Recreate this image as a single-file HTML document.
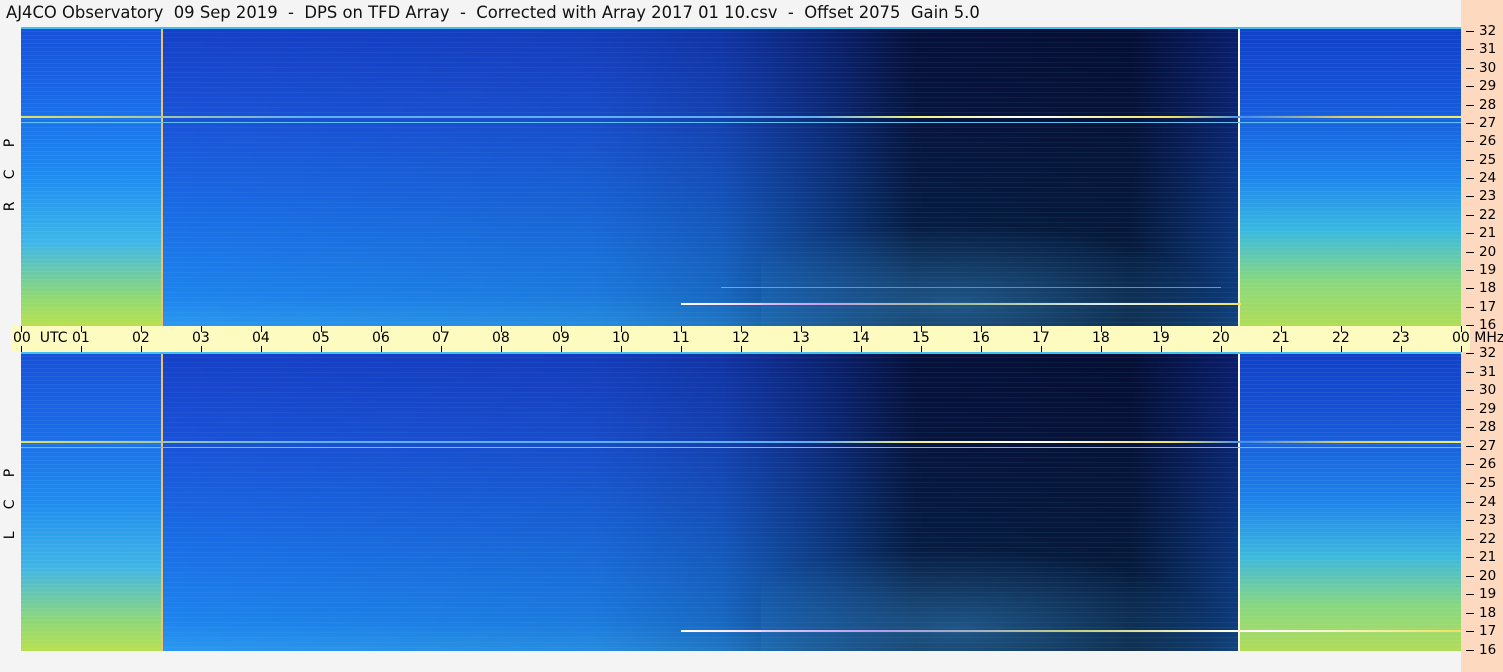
<!DOCTYPE html>
<html><head><meta charset="utf-8"><style>
body{margin:0;width:1503px;height:672px;background:#f4f4f4;position:relative;overflow:hidden;font-family:"DejaVu Sans","Liberation Sans",sans-serif}
.t{position:absolute;left:6px;top:3px;font-size:16.4px;color:#111;white-space:pre}
.peach{position:absolute;left:1461px;top:0;width:42px;height:672px;background:#fcd9bf}
.band{position:absolute;left:11px;top:326px;width:1459px;height:26px;background:#fdfbc0}
.p{position:absolute;left:21px;width:1440px;height:299px;overflow:hidden}
.seg{position:absolute;top:0;height:100%}
.L{left:0;width:140px;background:
 repeating-linear-gradient(180deg,rgba(255,255,255,.06) 0 1px,transparent 1px 4px),
 linear-gradient(180deg,#1650d8 0%,#1a6ae8 25%,#1e8cf0 50%,#3fb6e8 72%,#8ed878 90%,#b8e050 100%)}
.M{left:142px;width:1075px;background:
 repeating-linear-gradient(180deg,rgba(120,200,255,.07) 0 1px,transparent 1px 5px),
 linear-gradient(90deg,rgba(0,0,20,0) 0%,rgba(0,0,20,.08) 40%,rgba(0,0,30,.22) 52%,rgba(0,0,20,.5) 62%,rgba(0,0,10,.75) 70%,rgba(0,0,10,.78) 90%,rgba(0,0,30,.55) 100%),
 linear-gradient(180deg,#1640c8 0%,#1a52d8 30%,#1a6ae4 60%,#1e84ee 90%,#2a98f0 100%)}
.R{left:1219px;width:221px;background:
 repeating-linear-gradient(180deg,rgba(255,255,255,.06) 0 1px,transparent 1px 4px),
 linear-gradient(180deg,#1040c8 0%,#1656d8 25%,#1e84ec 50%,#3ab8e0 68%,#88d880 85%,#b0dc58 100%)}
.ln{position:absolute;top:0;height:100%;width:2px;background:#fff6d8}
.hl{position:absolute;height:2px}
.ax{position:absolute;font-size:14px;color:#000;white-space:nowrap}
.tk{position:absolute;width:1px;height:6px;background:#000}
.rt{position:absolute;left:1466px;width:8px;height:1px;background:#000}
.rl{position:absolute;left:1479px;font-size:13.5px;color:#000;line-height:14px}
.vl{position:absolute;left:-40px;width:100px;text-align:center;font-size:14px;color:#000;transform:rotate(-90deg);white-space:pre;line-height:16px}
</style></head><body>
<div class="t">AJ4CO Observatory  09 Sep 2019  -  DPS on TFD Array  -  Corrected with Array 2017 01 10.csv  -  Offset 2075  Gain 5.0</div>
<div class="peach"></div>
<div class="band"></div>

<div class="p" style="top:27px">
 <div class="seg L"></div><div class="seg M"></div><div class="seg R"></div>
 <div class="ln" style="left:140px;background:#f4c070"></div><div class="ln" style="left:1217px"></div>
 <div style="position:absolute;left:0;top:0;width:1440px;height:2px;background:#40c0f0"></div>
 <div class="hl" style="left:0;top:89px;width:1440px;background:linear-gradient(90deg,#e0e060,#60b0f0 20%,#60b0f0 55%,#f0f080 62%,#fff 70%,#f0e060 80%,#4090f0 85%,#e0d060 92%,#f0f070)"></div>
 <div class="hl" style="left:0;top:95px;width:1440px;height:1px;background:#60c0f0"></div>
 <div class="hl" style="left:660px;top:276px;width:560px;background:linear-gradient(90deg,#fff,#f0a0f0,#f0e060,#fff,#f0e060)"></div>
 <div class="hl" style="left:700px;top:260px;width:500px;height:1px;background:rgba(240,200,80,.6)"></div>
 <div style="position:absolute;left:740px;top:190px;width:480px;height:109px;background:radial-gradient(ellipse at 40% 80%,rgba(60,150,220,.45),transparent 65%)"></div>
</div>

<div class="p" style="top:352px">
 <div class="seg L"></div><div class="seg M"></div><div class="seg R"></div>
 <div class="ln" style="left:140px;background:#f4c070"></div><div class="ln" style="left:1217px"></div>
 <div style="position:absolute;left:0;top:0;width:1440px;height:2px;background:#40c0f0"></div>
 <div class="hl" style="left:0;top:89px;width:1440px;background:linear-gradient(90deg,#e0e060,#60b0f0 20%,#60b0f0 55%,#f0f080 62%,#fff 70%,#f0e060 80%,#4090f0 85%,#e0d060 92%,#f0f070)"></div>
 <div class="hl" style="left:0;top:95px;width:1440px;height:1px;background:#60c0f0"></div>
 <div class="hl" style="left:660px;top:278px;width:780px;background:linear-gradient(90deg,#fff,#f0a0f0,#f0e060,#fff,#f0e060)"></div>
 <div style="position:absolute;left:740px;top:190px;width:480px;height:109px;background:radial-gradient(ellipse at 40% 80%,rgba(60,150,220,.45),transparent 65%)"></div>
</div>

<div class="vl" style="top:167px">R     C     P</div>
<div class="vl" style="top:496px">L     C     P</div>

<div id="axes"></div>
<script>
var h='';
for(var i=0;i<=24;i++){var x=21+i*60;
 h+='<div class="tk" style="left:'+x+'px;top:326px"></div><div class="tk" style="left:'+x+'px;top:346px"></div>';
 var lab=(i<10?'0'+i:''+i);
 if(i==0)h+='<div class="ax" style="left:13px;top:330px">00 &nbsp;UTC</div>';
 else if(i==24)h+='<div class="ax" style="left:1452px;top:330px">00 MHz</div>';
 else h+='<div class="ax" style="left:'+(x-9)+'px;top:330px">'+lab+'</div>';}
function ra(top,bot){for(var f=32;f>=16;f--){var y=Math.round(top+(32-f)*(bot-top)/16);
 h+='<div class="rt" style="top:'+y+'px"></div><div class="rl" style="top:'+(y-7)+'px">'+f+'</div>';}}
ra(31,325);ra(353,650);
document.getElementById('axes').innerHTML=h;
</script>
</body></html>
